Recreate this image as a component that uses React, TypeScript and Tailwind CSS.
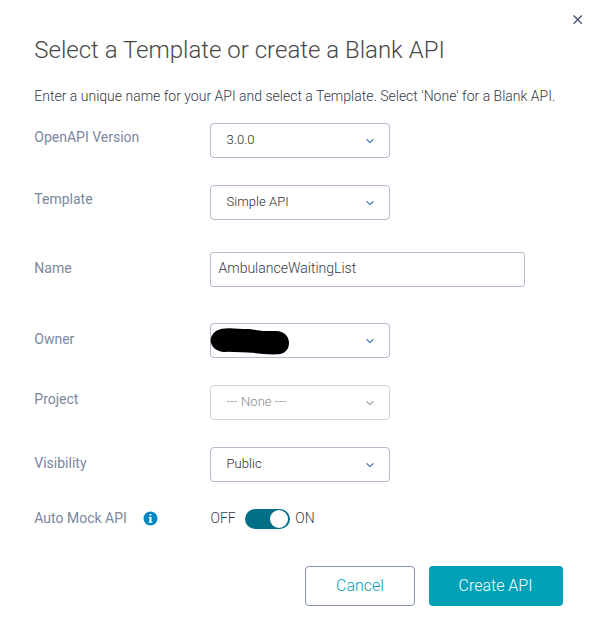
import React from "react";

function Chevron({ muted = false }: { muted?: boolean }) {
  return (
    <svg width="8" height="6" viewBox="0 0 8 6" fill="none" className={muted ? "text-[#929292]" : "text-[#2f62a8]"}>
      <path d="M.6 1.3 4 4.6 7.4 1.3" stroke="currentColor" strokeWidth="1.1" />
    </svg>
  );
}

function Select({ value, muted = false, redacted = false }: { value?: string; muted?: boolean; redacted?: boolean }) {
  return (
    <div className={`relative flex h-[35px] w-[180px] items-center justify-between rounded-[4px] border pr-[15px] pl-[15.5px] text-[13px] ${muted ? "border-[#cfd3df] text-[#888]" : "border-[#b1bacb] text-[#2b2b2b]"}`}>
      <span className="pb-[2px] tracking-[0.05px]">{value}</span>
      <Chevron muted={muted} />
      {redacted && (
        <svg className="absolute -top-px -left-px" width="90" height="36" viewBox="0 0 90 36">
          <path d="M12 5.8C20 4.3 25 6 39 6L53 7.9H66C74 8 79 13 79 20C79 26 75 31 68 31.3C57 32 47 29.8 38 29.5L17 28.7C9 30.2 1 25 .7 18C.5 12 5 7.2 12 5.8Z" fill="#000" />
        </svg>
      )}
    </div>
  );
}

function Label({ children }: { children: React.ReactNode }) {
  return <div className="w-[176px] shrink-0 pl-[.3px] text-[14px] leading-5 font-normal text-[#7b87a0]">{children}</div>;
}

export default function App() {
  return (
    <main className="relative h-[640px] w-[598px] overflow-hidden bg-white pl-[34px] font-[Roboto,sans-serif] font-light text-[#343a47]">
      <svg className="absolute top-[15px] left-[573px]" width="10" height="10" viewBox="0 0 10 10" fill="none">
        <path d="m.6.6 8.2 8.2M8.8.6.6 8.8" stroke="#4b586d" strokeWidth="1.4" />
      </svg>
      <h1 className="pt-[34px] pl-[.3px] text-[24px] leading-8 font-light text-[#484848]">Select a Template or create a Blank API</h1>
      <p className="mt-[20px] pl-[.3px] text-[14px] leading-5 whitespace-nowrap">Enter a unique name for your API and select a Template. Select 'None' for a Blank API.</p>
      <div className="mt-[17px] flex h-[62px]"><div className="pt-1"><Label>OpenAPI Version</Label></div><Select value="3.0.0" /></div>
      <div className="flex h-[67px]"><div className="pt-1"><Label>Template</Label></div><Select value="Simple API" /></div>
      <div className="flex h-[71px]"><div className="pt-[6px]"><Label>Name</Label></div><div className="flex h-[35px] w-[315px] items-center rounded-[3px] border border-[#b1bacb] px-[7.5px] pb-[2px] text-[14px]">AmbulanceWaitingList</div></div>
      <div className="flex h-[62px]"><div className="pt-[6px]"><Label>Owner</Label></div><Select redacted /></div>
      <div className="flex h-[62px]"><div className="pt-1"><Label>Project</Label></div><Select value="--- None ---" muted /></div>
      <div className="flex h-[61px]"><div className="pt-[6px]"><Label>Visibility</Label></div><Select value="Public" /></div>
      <div className="flex h-5 items-center text-[14px]">
        <span className="w-[109px] pl-[.3px] font-normal text-[#7b87a0]">Auto Mock API</span>
        <svg width="15" height="15" viewBox="0 0 14 14"><circle cx="7" cy="7" r="6.5" fill="#0086c0" /><path d="M5.2 5.5h2.7V10h.9v1H5.1v-1h.9V6.5h-.8zM6 2.7h1.9v1.8H6z" fill="#fff" /></svg>
        <span className="ml-[52px] w-[35px] pl-[.5px]">OFF</span>
        <span className="relative top-px flex h-5 w-[45px] items-center justify-end rounded-full bg-[#006f87] pr-[2px]"><span className="h-[18px] w-[18px] rounded-full bg-white" /></span>
        <span className="ml-[5px] pl-[.3px]">ON</span>
      </div>
      <div className="mt-[38px] ml-[271px] flex gap-[14px] text-[16px]">
        <button className="h-10 w-[110px] rounded-[4px] border border-[#8593aa] font-light text-[#009fb7]">Cancel</button>
        <button className="h-10 w-[134px] rounded-[4px] bg-[#00a0b7] pr-px font-light text-white">Create API</button>
      </div>
    </main>
  );
}
